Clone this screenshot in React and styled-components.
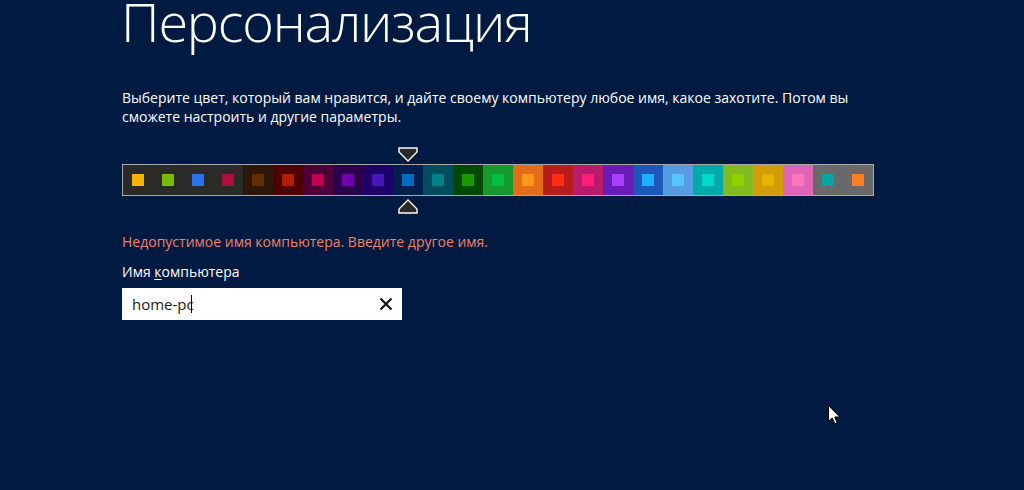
import React from 'react';
import styled, { createGlobalStyle } from 'styled-components';

const GlobalStyle = createGlobalStyle`
  html, body {
    margin: 0;
    padding: 0;
    background: #011a41;
    overflow: hidden;
  }
  body {
    font-family: "Open Sans", "Noto Sans", sans-serif;
    color: #ffffff;
  }
`;

const Page = styled.div`
  position: relative;
  width: 1024px;
  height: 490px;
  padding-left: 122px;
  box-sizing: border-box;
`;

const Title = styled.h1`
  margin: -4px 0 0 -1px;
  font-family: "Open Sans", sans-serif;
  font-weight: 300;
  font-size: 54px;
  line-height: 50px;
  letter-spacing: -1.2px;
`;

const Intro = styled.p`
  margin: 42px 0 0;
  font-size: 14px;
  line-height: 19px;
`;

const Strip = styled.div`
  display: flex;
  width: max-content;
  margin-top: 38px;
  border: 1px solid #a9a9a9;
`;

const Tile = styled.div`
  position: relative;
  display: flex;
  align-items: center;
  justify-content: center;
  width: 30px;
  height: 30px;
  background: ${(p) => p.$bg};
`;

const Swatch = styled.span`
  width: 12px;
  height: 12px;
  background: ${(p) => p.$color};
`;

const Marker = styled.svg`
  position: absolute;
  left: 5px;
  ${(p) => (p.$up ? 'top: 33px;' : 'top: -18px;')}
  width: 20px;
  height: 16px;
`;

const Error = styled.p`
  margin: 36px 0 0;
  font-size: 14px;
  line-height: 19px;
  color: #f0806c;
`;

const Label = styled.label`
  display: block;
  margin-top: 11px;
  font-size: 14px;
  line-height: 19px;

  u {
    text-decoration-thickness: 1px;
    text-underline-offset: 2px;
  }
`;

const Field = styled.div`
  display: flex;
  align-items: center;
  width: 280px;
  height: 32px;
  margin-top: 7px;
  padding: 0 10px;
  box-sizing: border-box;
  background: #ffffff;
  color: #1a1a1a;
`;

const Value = styled.span`
  flex: 1;
  display: flex;
  align-items: center;
  font-size: 15px;
`;

const Caret = styled.span`
  width: 1px;
  height: 18px;
  margin-left: -3px;
  background: #000;
`;

const Clear = styled.svg`
  width: 14px;
  height: 14px;
  margin-right: -1px;
`;

const Pointer = styled.svg`
  position: absolute;
  left: 828px;
  top: 409px;
  width: 13px;
  height: 20px;
`;

const tiles = [
  { bg: '#2a2a28', sq: '#f4b300' },
  { bg: '#2a2a28', sq: '#78ba00' },
  { bg: '#2a2a28', sq: '#2673ec' },
  { bg: '#2a2a28', sq: '#ae113d' },
  { bg: '#2d1706', sq: '#632f00' },
  { bg: '#4e0000', sq: '#b01e00' },
  { bg: '#4e0038', sq: '#c1004f' },
  { bg: '#2d004e', sq: '#7200ac' },
  { bg: '#1f0068', sq: '#4617b4' },
  { bg: '#001e4e', sq: '#006ac1', selected: true },
  { bg: '#004d60', sq: '#008287' },
  { bg: '#004a00', sq: '#199900' },
  { bg: '#15992a', sq: '#00c13f' },
  { bg: '#e56c19', sq: '#ff981d' },
  { bg: '#b81b1b', sq: '#ff2e12' },
  { bg: '#b81b6c', sq: '#ff1d77' },
  { bg: '#691bb8', sq: '#aa40ff' },
  { bg: '#1b58b8', sq: '#1faeff' },
  { bg: '#569ce3', sq: '#56c5ff' },
  { bg: '#00aaaa', sq: '#00d8cc' },
  { bg: '#83ba1f', sq: '#91d100' },
  { bg: '#d39d09', sq: '#e1b700' },
  { bg: '#e064b7', sq: '#ff76bc' },
  { bg: '#696969', sq: '#00a4a4' },
  { bg: '#696969', sq: '#ff7d23' },
];

function Markers() {
  return (
    <>
      <Marker viewBox="0 0 20 16">
        <path d="M1 1 H19 V5 L10 14 L1 5 Z" fill="#2a2a2a" stroke="#fff" strokeWidth="1.4" />
      </Marker>
      <Marker $up viewBox="0 0 20 16">
        <path d="M1 15 H19 V11 L10 2 L1 11 Z" fill="#2a2a2a" stroke="#fff" strokeWidth="1.4" />
      </Marker>
    </>
  );
}

export default function App() {
  return (
    <Page>
      <GlobalStyle />
      <Title>Персонализация</Title>
      <Intro>
        Выберите цвет, который вам нравится, и дайте своему компьютеру любое имя, какое захотите. Потом вы
        <br />
        сможете настроить и другие параметры.
      </Intro>
      <Strip>
        {tiles.map((t, i) => (
          <Tile key={i} $bg={t.bg}>
            <Swatch $color={t.sq} />
            {t.selected && <Markers />}
          </Tile>
        ))}
      </Strip>
      <Error>Недопустимое имя компьютера. Введите другое имя.</Error>
      <Label>
        Имя <u>к</u>омпьютера
      </Label>
      <Field>
        <Value>
          home-pc
          <Caret />
        </Value>
        <Clear viewBox="0 0 14 14">
          <path d="M1.5 1.5 L12.5 12.5 M12.5 1.5 L1.5 12.5" stroke="#111" strokeWidth="2.2" />
        </Clear>
      </Field>
      <Pointer viewBox="0 0 13 20">
        <path d="M0.5 0.5 V16.5 L4.2 12.9 L6.8 18.8 L9.2 17.8 L6.7 12 H11.8 Z" fill="#fff" stroke="#000" strokeWidth="1" />
      </Pointer>
    </Page>
  );
}
